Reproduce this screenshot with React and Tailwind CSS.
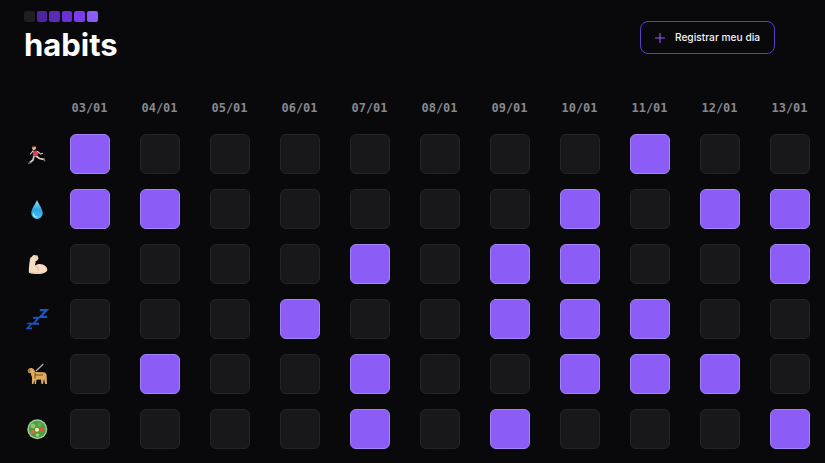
import React from 'react';

const dates = ['03/01', '04/01', '05/01', '06/01', '07/01', '08/01', '09/01', '10/01', '11/01', '12/01', '13/01'];

const Runner = () => (
  <svg width="24" height="24" viewBox="0 0 24 24" fill="none" strokeLinecap="round">
    <path d="M9 14l-1 4-3 2.5" stroke="#e6c4b4" strokeWidth="1.7" />
    <path d="M11 14l3.5 2.5 4.5.8" stroke="#ecd0c0" strokeWidth="1.7" />
    <path d="M5 20.5l-1.5.8M19 17.3l.7 1.6" stroke="#6b6b70" strokeWidth="1.5" />
    <path d="M8 9l3.5-.6 2 3-1.2 2.6-4.5-.6z" fill="#d63f62" />
    <path d="M8 8.8L5.5 12M12.5 9.5l3 2.5 2-.6" stroke="#e6c4b4" strokeWidth="1.1" />
    <circle cx="9" cy="6" r="2" fill="#e7bda6" />
    <path d="M7 5.6a2 2 0 0 1 3.6-1l-1.8.8z" fill="#6a3a24" />
  </svg>
);

const Drop = () => (
  <svg width="24" height="24" viewBox="0 0 24 24">
    <defs>
      <linearGradient id="drop" x1="0" y1="0" x2="0" y2="1">
        <stop offset="0" stopColor="#9be2f7" />
        <stop offset="0.5" stopColor="#2aa6e6" />
        <stop offset="1" stopColor="#4fc0f2" />
      </linearGradient>
    </defs>
    <path d="M12 3c1.4 4 5.700 8.500 5.700 13.300a5.700 5.700 0 0 1-11.400 0C6.300 11.500 10.600 7 12 3z" fill="url(#drop)" />
    <path d="M8.500 16.500a3.500 3.500 0 0 0 3.500 3.500" fill="none" stroke="#b5ecfb" strokeWidth="1.200" strokeLinecap="round" />
  </svg>
);

const Muscle = () => (
  <svg width="24" height="24" viewBox="0 0 24 24">
    <path d="M5.500 6L8.500 3l4 .5 1 3-1.500 2.300-1.300.2-.7 4.500c2.300-1.800 5.200-2 7.800-1 2.700 1 4.700 3.200 4.500 5.300-.2 2.500-4 4.200-9 4.200-3.500 0-7-.2-9.300-1.300-.5-.8 0-9.500 1.500-15.700z" fill="#f5dcc2" />
    <path d="M10.500 13.500c1.600 1 2.700 2.800 3 5" fill="none" stroke="#d8ae8a" strokeWidth="0.900" />
    <path d="M10 4.500l1 2" stroke="#d8ae8a" strokeWidth="0.700" />
    <path d="M5 20c3 1 8 1.500 12 .8" fill="none" stroke="#e6c09c" strokeWidth="0.800" />
  </svg>
);

const Zzz = () => (
  <svg width="24" height="24" viewBox="0 0 24 24" fill="none" stroke="#1a56c4">
    <path d="M14.800 3.200h6.700l-6.200 6.600h6.700" strokeWidth="2.300" />
    <path d="M8.200 10.800h5.300l-5 5.900h5.500" strokeWidth="2" />
    <path d="M2.200 16.500h4.400l-4.200 4.800h4.600" strokeWidth="1.700" />
  </svg>
);

const Dog = () => (
  <svg width="24" height="24" viewBox="0 0 24 24">
    <path d="M11 9l7.300-7" stroke="#b9b2a8" strokeWidth="1.200" />
    <path d="M2.500 8.500C3.500 5.500 7.500 5 9 7.500l1.500 2.500 7.500.3c2.800 0 4 2 3.700 4.700l.3 7h-2l-1-5-1 5h-1.500l-.6-4.500-4.400.3-.5 4.200H9.700l-.4-4.200-.8 4.200H6.900L7 15c-.8-1.500-1-2.700-1-3.700l-2.600-.6z" fill="#dcab5f" />
    <path d="M4 7c-1 1-1 2.800-.2 3.600L6 8.500z" fill="#a8742f" />
    <path d="M10 10.500v6M10 13h8" stroke="#7a4a1c" strokeWidth="1" />
  </svg>
);

const Salad = () => (
  <svg width="24" height="24" viewBox="0 0 24 24">
    <circle cx="12.300" cy="12.300" r="10" fill="#a6cf9a" />
    <circle cx="12.300" cy="12.300" r="8.500" fill="#4c9c45" />
    <circle cx="8" cy="9" r="2.400" fill="#86cc5c" />
    <circle cx="14.500" cy="7.500" r="2.200" fill="#62b04a" />
    <circle cx="17" cy="12.500" r="2.400" fill="#de5a42" />
    <circle cx="7.700" cy="15" r="2.200" fill="#de6a42" />
    <circle cx="12" cy="12.800" r="2" fill="#eef2b8" />
    <circle cx="12.500" cy="18" r="1.800" fill="#97d672" />
  </svg>
);

const habits = [
  { icon: <Runner />, done: [0, 8] },
  { icon: <Drop />, done: [0, 1, 7, 9, 10] },
  { icon: <Muscle />, done: [4, 6, 7, 10] },
  { icon: <Zzz />, done: [3, 6, 7, 8] },
  { icon: <Dog />, done: [1, 4, 7, 8, 9] },
  { icon: <Salad />, done: [4, 6, 10] },
];

function Cell({ active }) {
  return (
    <div
      className={
        active
          ? 'w-10 h-10 rounded-md bg-[#8b5cf6] border border-[#a284f7]'
          : 'w-10 h-10 rounded-md bg-[#18181b] border border-[#242427]'
      }
    />
  );
}

export default function App() {
  return (
    <div className="w-[825px] h-[463px] overflow-hidden bg-[#09090b] pl-6 font-['Inter',sans-serif]">
      <header className="flex justify-between items-start pt-[11px] pr-[50px]">
        <div>
          <div className="flex gap-[2px]">
            <div className="w-[10.6px] h-[10.6px] rounded-[2px] bg-[#1f1f22]" />
            <div className="w-[10.6px] h-[10.6px] rounded-[2px] bg-[#4f23a0]" />
            <div className="w-[10.6px] h-[10.6px] rounded-[2px] bg-[#5b2bb8]" />
            <div className="w-[10.6px] h-[10.6px] rounded-[2px] bg-[#6a30d6]" />
            <div className="w-[10.6px] h-[10.6px] rounded-[2px] bg-[#7c3aed]" />
            <div className="w-[10.6px] h-[10.6px] rounded-[2px] bg-[#8b5cf6]" />
          </div>
          <h1 className="text-[31px] leading-[38px] font-bold text-white mt-[4px]">habits</h1>
        </div>
        <button className="mt-[10px] w-[135px] h-[33px] flex items-center justify-center gap-[10px] rounded-lg border border-[#5b3fc4] text-[#f4f4f5] text-[10.2px] font-medium">
          <svg width="10" height="10" viewBox="0 0 10 10" fill="none" stroke="#8b5cf6" strokeWidth="1.100">
            <path d="M5 0v10M0 5h10" />
          </svg>
          Registrar meu dia
        </button>
      </header>

      <div className="flex mt-[36px] pl-[45.5px] gap-[30px]">
        {dates.map(d => (
          <div key={d} className="w-10 text-center text-xs font-bold font-['DejaVu_Sans_Mono',monospace] text-[#87878d] whitespace-nowrap">
            {d}
          </div>
        ))}
      </div>

      <div className="flex flex-col gap-[15px] mt-[18px]">
        {habits.map((h, i) => (
          <div key={i} className="flex items-center">
            <div className="w-[26px] mr-[20px] flex justify-center">{h.icon}</div>
            <div className="flex gap-[30px]">
              {dates.map((d, j) => (
                <Cell key={d} active={h.done.includes(j)} />
              ))}
            </div>
          </div>
        ))}
      </div>
    </div>
  );
}
